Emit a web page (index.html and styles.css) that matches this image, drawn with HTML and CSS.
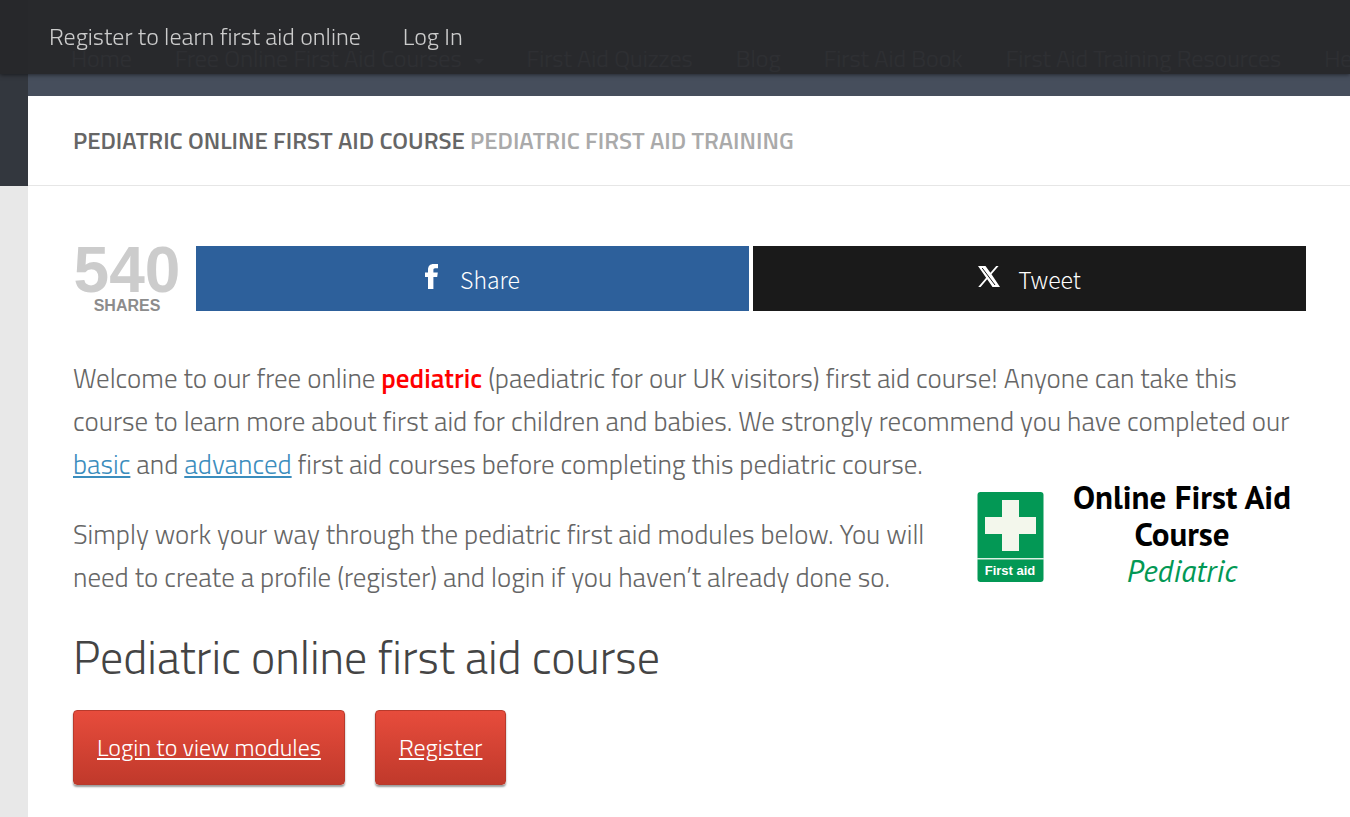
FILE: index.html
```html
<!DOCTYPE html>
<html lang="en">
<head>
    <meta charset="UTF-8">
    <meta name="viewport" content="width=device-width, initial-scale=1.0">
    <title>Pediatric Online First Aid Course</title>
    <link rel="stylesheet" href="styles.css">
</head>
<body>
    <nav class="topbar">
        <a href="#">Register to learn first aid online</a>
        <a href="#">Log In</a>
    </nav>

    <div class="wrapper">
        <header class="header">
            <nav class="main-nav">
                <a href="#">Home</a>
                <a href="#" class="has-menu">Free Online First Aid Courses</a>
                <a href="#">First Aid Quizzes</a>
                <a href="#">Blog</a>
                <a href="#">First Aid Book</a>
                <a href="#">First Aid Training Resources</a>
                <a href="#">Help</a>
            </nav>
        </header>

        <div class="page-title">
            <h1>Pediatric Online First Aid Course <span>Pediatric First Aid Training</span></h1>
        </div>

        <main class="entry">
            <div class="shares">
                <div class="share-count">
                    <span class="number">540</span>
                    <span class="label">SHARES</span>
                </div>
                <a href="#" class="share-btn facebook">
                    <svg viewBox="0 0 13 25" width="13" height="25" aria-hidden="true">
                        <path fill="#fff" d="M3 25V13H0V8.600H3V6C3 2 5 0 8.600 0H13V4.300H10.200C8.800 4.300 8.400 5 8.400 6.200V8.600H12.800L12.200 13H8.400V25Z"/>
                    </svg>
                    Share
                </a>
                <a href="#" class="share-btn twitter">
                    <svg viewBox="0 0 22 21" width="22" height="21" aria-hidden="true">
                        <path fill="#fff" d="M0 0H7.500L12.400 6.800 18.200 0H20.600L13.500 8.300 22 21H14.500L9.200 13.300 2.600 21H0.200L8.100 11.700Z"/>
                        <path fill="none" stroke="#1a1a1a" stroke-width="1" d="M4.200 2L17 19"/>
                    </svg>
                    Tweet
                </a>
            </div>

            <p>Welcome to our free online <strong>pediatric</strong> (paediatric for our UK visitors) first aid course! Anyone can take this course to learn more about first aid for children and babies. We strongly recommend you have completed our <a href="#">basic</a> and <a href="#">advanced</a> first aid courses before completing this pediatric course.</p>

            <div class="course-logo">
                <svg class="sign" viewBox="0 0 68 91" width="68" height="91" role="img" aria-label="First aid">
                    <rect x="0.500" y="1" width="66" height="90" rx="3" fill="#039855"/>
                    <path fill="#f3f7ec" d="M25 9H42V26H59V43H42V60H25V43H8V26H25Z"/>
                    <rect x="0" y="67" width="67" height="1.500" fill="#d9f0e2"/>
                    <text x="33" y="84" text-anchor="middle" class="sign-text">First aid</text>
                </svg>
                <div class="course-name">
                    <b>Online First Aid Course</b>
                    <i>Pediatric</i>
                </div>
            </div>

            <p>Simply work your way through the pediatric first aid modules below. You will need to create a profile (register) and login if you haven’t already done so.</p>

            <h2>Pediatric online first aid course</h2>

            <div class="buttons">
                <a href="#" class="btn">Login to view modules</a>
                <a href="#" class="btn">Register</a>
            </div>
        </main>
    </div>
</body>
</html>
```

FILE: styles.css
```css
* {
    box-sizing: border-box;
}
body {
    margin: 0;
    min-height: 100vh;
    font-family: "Titillium Web", Roboto, sans-serif;
    font-weight: 300;
    color: #666;
    background: linear-gradient(#33373e 186px, #e8e8e8 186px);
    overflow-x: hidden;
}

/* fixed bar on top of the main menu */
.topbar {
    position: fixed;
    top: 0;
    left: 0;
    right: 0;
    z-index: 10;
    display: flex;
    gap: 42px;
    height: 74px;
    padding-left: 49px;
    line-height: 72px;
    font-size: 24px;
    background: rgba(38, 40, 43, 0.96);
    box-shadow: 0 1px 4px rgba(0, 0, 0, 0.5);
}
.topbar a {
    color: #ccc;
    text-decoration: none;
}

.wrapper {
    min-height: 100vh;
    margin-left: 28px;
    background: #fff;
}
.header {
    height: 96px;
    padding: 40px 0 0 43px;
    background: #464e5c;
    overflow: hidden;
}
.main-nav {
    display: flex;
    gap: 43px;
    font-size: 24px;
    line-height: 36px;
    white-space: nowrap;
}
.main-nav a {
    color: #e4e7eb;
    text-decoration: none;
}
.has-menu::after {
    content: "";
    display: inline-block;
    margin-left: 12px;
    border: 5px solid transparent;
    border-top-color: #c8ccd2;
    border-bottom: 0;
    vertical-align: middle;
}

.page-title {
    padding: 0 45px;
    border-bottom: 1px solid #e6e6e6;
}
.page-title h1 {
    margin: 0;
    font-size: 24px;
    font-weight: 600;
    line-height: 89px;
    text-transform: uppercase;
}
.page-title span {
    color: #aaa;
}

.entry {
    padding: 60px 44px 30px 45px;
}
.entry p {
    margin: 0 0 27px;
    font-size: 27px;
    line-height: 43px;
}
.entry p a {
    color: #3b8dbd;
}
.entry strong {
    color: #f00;
    font-weight: 600;
}
.entry h2 {
    margin: 0 0 21px;
    font-size: 46px;
    font-weight: 300;
    line-height: 64px;
    color: #444;
}

.shares {
    display: flex;
    gap: 4px;
    margin-bottom: 38px;
}
.share-count {
    display: flex;
    flex-direction: column;
    width: 119px;
    padding-right: 11px;
    font-family: "Liberation Sans", Arial, sans-serif;
    font-weight: bold;
    text-align: center;
}
.share-count .number {
    font-size: 64px;
    line-height: 48px;
    color: #ccc;
}
.share-count .label {
    font-size: 16px;
    line-height: 24px;
    color: #8c8c8c;
}
.share-btn {
    flex: 1;
    display: flex;
    align-items: center;
    justify-content: center;
    height: 65px;
    font-family: "Source Sans Pro", "Noto Sans CJK SC", "Open Sans", sans-serif;
    font-size: 23px;
    font-weight: 300;
    color: #fff;
    text-decoration: none;
}
.share-btn svg {
    margin-bottom: 4px;
}
.facebook {
    gap: 22px;
    background: #2d609b;
}
.twitter {
    gap: 18px;
    background: #1a1a1a;
}

.course-logo {
    float: right;
    display: flex;
    gap: 22px;
    margin: -34px 0 0 20px;
    padding-right: 9px;
}
.sign {
    margin-top: 13px;
}
.sign-text {
    font-family: "Liberation Sans", Arial, sans-serif;
    font-size: 13px;
    font-weight: bold;
    fill: #fff;
}
.course-name {
    width: 230px;
    text-align: center;
    font-family: "PT Sans", Lato, sans-serif;
    line-height: 37px;
}
.course-name b {
    display: block;
    font-size: 33px;
    font-weight: 700;
    color: #000;
}
.course-name i {
    font-size: 31px;
    font-weight: 400;
    color: #039855;
}

.buttons {
    display: flex;
    gap: 30px;
}
.btn {
    padding: 0 23px;
    border: 1px solid #b83a2c;
    border-radius: 4px;
    font-size: 24px;
    line-height: 73px;
    color: #fff;
    background: linear-gradient(#e74c3c, #c0392b);
    box-shadow: 0 2px 2px rgba(0, 0, 0, 0.4);
}
```
